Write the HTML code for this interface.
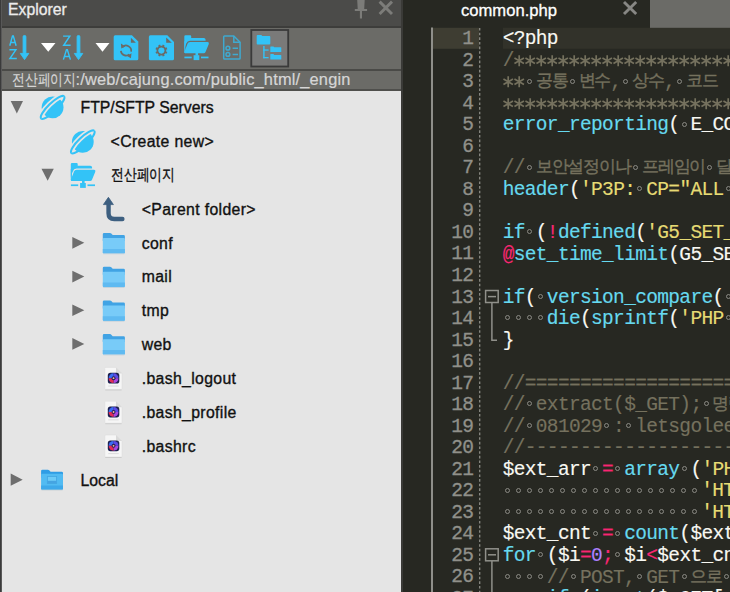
<!DOCTYPE html>
<html><head><meta charset="utf-8">
<style>
*{margin:0;padding:0;box-sizing:border-box}
html,body{width:730px;height:592px;overflow:hidden;background:#272822;font-family:"Liberation Sans",sans-serif}
.a{position:absolute}
#left{position:absolute;left:0;top:0;width:401px;height:592px;background:#e5e5e5;overflow:hidden}
#hdr{left:0;top:0;width:401px;height:25.5px;background:#4b4b49}
#hdr .t{left:8px;top:-3.7px;font-size:15.8px;line-height:27px;color:#ececec;-webkit-text-stroke:0.3px #ececec}
#sep1{left:0;top:25.5px;width:401px;height:2px;background:#3d3d3b}
#tb{left:0;top:27.5px;width:401px;height:41px;background:#6b6b67}
#sep2{left:0;top:68.5px;width:401px;height:2px;background:#4a4a47}
#path{left:0;top:70.5px;width:401px;height:18.5px;background:#6b6b67}
#path .t{left:12px;top:-1.2px;letter-spacing:0.18px;font-size:16.4px;line-height:20px;color:#d6d6d6;white-space:nowrap;-webkit-text-stroke:0.2px #d6d6d6}
#sep3{left:0;top:89px;width:401px;height:2px;background:#4f4f4c}
#lb{left:0;top:0;width:2px;height:592px;background:linear-gradient(90deg,#353535 0,#444 65%,#8a8a8a 100%);z-index:3}
#split{left:401px;top:0;width:2.2px;height:592px;background:#3a3a37;z-index:5}
.row{position:absolute;font-size:15.8px;color:#111;white-space:nowrap;line-height:20px;margin-top:0.6px;-webkit-text-stroke:0.35px #111}
#ed{position:absolute;left:403.5px;top:0;width:326.5px;height:592px;background:#272822;overflow:hidden}
.ln{position:absolute;left:0;width:473.4px;text-align:right;font-family:"Liberation Mono",monospace;font-size:19.5px;letter-spacing:-0.66px;color:#90908a;line-height:21.53px;height:21.53px;margin-top:1.2px;-webkit-text-stroke:0.3px #90908a}
.cl{position:absolute;left:502.7px;white-space:pre;font-family:"Liberation Mono",monospace;font-size:19.5px;letter-spacing:-0.66px;color:#f8f8f2;line-height:21.53px;height:21.53px;margin-top:1.3px;-webkit-text-stroke:0.15px currentColor}
.c{color:#75715e}.f{color:#66d9ef}.s{color:#e6db74}.k{color:#f92672}.n{color:#ae81ff}.w{color:#f8f8f2}
.ko{position:relative;top:-1px;font-size:17.2px;letter-spacing:-1.16px;-webkit-text-stroke:0.35px currentColor}
.d{display:inline-block;width:11.04px;height:21.53px;position:relative;vertical-align:top}
.d::after{content:"";box-sizing:border-box;position:absolute;left:2.2px;top:6.2px;width:5px;height:5px;border:1.4px solid #8a8a84;border-radius:50%}
.st{display:inline-block;width:11.04px;height:21.53px;vertical-align:top}
</style></head><body>
<div id="left">
  <div id="lb" class="a"></div>
  <div id="hdr" class="a"><div class="t a">Explorer</div>
    <svg class="a" style="left:0;top:0" width="401" height="26">
      <path d="M357.2 0 H364.7 L364.2 8.9 H367.1 V11 H362 V18.5 H359.9 V11 H354.8 V8.9 H357.7 Z" fill="#7c7c79"/>
      <path d="M379.6 1.6 L392 14 M392 1.6 L379.6 14" stroke="#7c7c79" stroke-width="2.9"/>
    </svg>
  </div>
  <div id="sep1" class="a"></div>
  <div id="tb" class="a"></div>
  <div id="sep2" class="a"></div>
  <div id="path" class="a"><div class="t a"><span style="display:inline-block;font-size:15.9px;letter-spacing:0;transform:scaleX(0.8);transform-origin:0 0;width:63.5px;position:relative;top:-0.5px;-webkit-text-stroke:0.15px #d6d6d6">전산페이지</span><span style="margin-left:0px">:/web/cajung.com/public_html/_engin</span></div></div>
  <div id="sep3" class="a"></div>
  <svg class="a" style="left:0;top:0" width="401" height="71">
    <g fill="none" stroke="#33c3f7" stroke-width="1.45" stroke-linejoin="miter">
      <path d="M9.8 45.7 L12.5 35.9 H13.3 L16.1 45.7 M10.7 42.5 H15.2"/>
      <path d="M9.4 49.8 H15.9 L9.9 58.5 H16.8"/>
      <path d="M63.1 36.1 H69.8 L63.7 45.3 H70.6"/>
      <path d="M63.4 59.6 L66.5 49.6 H67.3 L70.4 59.6 M64.4 56.5 H69.4"/>
    </g>
    <g fill="#33c3f7" stroke="#33c3f7" stroke-width="0.9" stroke-linejoin="round">
      <rect x="23.1" y="35.5" width="2.8" height="18.5" rx="1.2"/>
      <path d="M20.3 53.4 H28.8 L24.55 59.6 Z"/>
      <rect x="77.1" y="35.5" width="2.8" height="18.5" rx="1.2"/>
      <path d="M74.3 53.4 H82.8 L78.55 59.6 Z"/>
    </g>
    <path d="M41 43 H55.5 L48.25 51.7 Z M95.5 43 H109.5 L102.5 51.7 Z" fill="#fff"/>
    <!-- refresh doc -->
    <path d="M115.2 35.2 H131.9 L138.3 41.6 V58.8 Q138.3 60.3 136.8 60.3 H115.2 Q113.7 60.3 113.7 58.8 V36.7 Q113.7 35.2 115.2 35.2 Z" fill="#33c3f7"/>
    <path d="M130.9 37.8 V42.75 H135.9 Z" fill="#6b6b67"/>
    <g fill="none" stroke="#6b6b67" stroke-width="1.7">
      <path d="M122.5 46.9 A5.2 5.2 0 0 1 131.12 51.6"/>
      <path d="M120.88 50.8 A5.2 5.2 0 0 0 129.4 54.3"/>
    </g>
    <path d="M120.9 43.4 L121.3 48.6 L125.4 46.4 Z M127.1 55.9 L131.5 53.2 L130.9 58.2 Z" fill="#6b6b67"/>
    <!-- settings doc -->
    <path d="M150.4 35.2 H167.3 L174 41.9 V58.8 Q174 60.3 172.5 60.3 H150.4 Q148.9 60.3 148.9 58.8 V36.7 Q148.9 35.2 150.4 35.2 Z" fill="#33c3f7"/>
    <path d="M166.2 37.4 V42.75 H171.8 Z" fill="#6b6b67"/>
    <g transform="translate(161.4 50.55)">
      <circle r="4" fill="none" stroke="#6b6b67" stroke-width="1.7"/>
      <g fill="#6b6b67">
        <rect x="-1" y="-6" width="2" height="2.6" transform="rotate(22.5)"/>
        <rect x="-1" y="-6" width="2" height="2.6" transform="rotate(67.5)"/>
        <rect x="-1" y="-6" width="2" height="2.6" transform="rotate(112.5)"/>
        <rect x="-1" y="-6" width="2" height="2.6" transform="rotate(157.5)"/>
        <rect x="-1" y="-6" width="2" height="2.6" transform="rotate(202.5)"/>
        <rect x="-1" y="-6" width="2" height="2.6" transform="rotate(247.5)"/>
        <rect x="-1" y="-6" width="2" height="2.6" transform="rotate(292.5)"/>
        <rect x="-1" y="-6" width="2" height="2.6" transform="rotate(337.5)"/>
      </g>
    </g>
    <!-- network folder -->
    <g transform="translate(184.3 35.2)"><use href="#netf" style="--bg:#6b6b67"/></g>
    <!-- list doc -->
    <g fill="none" stroke="#3fa9cf" stroke-width="1.5">
      <path d="M224.5 36 H233.8 L240.1 42.3 V58.2 Q240.1 59 239.3 59 H224.5 Q223.7 59 223.7 58.2 V36.8 Q223.7 36 224.5 36 Z"/>
      <path d="M233.8 36 V42.3 H240.1"/>
      <circle cx="227.9" cy="48.2" r="1.9"/>
      <circle cx="227.9" cy="54.4" r="1.9"/>
      <path d="M232.6 48.2 H238 M232.6 54.4 H238"/>
    </g>
    <!-- pressed tree button -->
    <rect x="251.3" y="30" width="36.9" height="36.5" fill="#7a7a79" stroke="#3a3a3a" stroke-width="1.8"/>
    <g fill="#33c3f7">
      <path d="M256.7 36 Q256.7 35.1 257.6 35.1 H261 Q261.8 35.1 262.2 36 H269.4 Q270.3 36 270.3 36.9 V43.5 Q270.3 44.4 269.4 44.4 H257.6 Q256.7 44.4 256.7 43.5 Z"/>
      <path d="M270.3 47 Q270.3 46.5 270.8 46.5 H273.5 L274.2 47.3 H280.8 Q281.3 47.3 281.3 47.8 V51.5 Q281.3 52 280.8 52 H270.8 Q270.3 52 270.3 51.5 Z"/>
      <path d="M270.3 54.6 Q270.3 54.1 270.8 54.1 H273.5 L274.2 54.9 H280.8 Q281.3 54.9 281.3 55.4 V59.1 Q281.3 59.6 280.8 59.6 H270.8 Q270.3 59.6 270.3 59.1 Z"/>
      <rect x="263.2" y="46" width="1.4" height="12.3"/>
      <rect x="263.2" y="49.4" width="5.4" height="1.3"/>
      <rect x="263.2" y="57" width="5.4" height="1.3"/>
    </g>
  </svg>
  <!-- tree -->
  <div class="row" style="left:80.5px;top:97px">FTP/SFTP Servers</div>
  <div class="row" style="left:110.6px;top:131px;letter-spacing:0.35px">&lt;Create new&gt;</div>
  <div class="row" style="left:110.5px;top:165px"><span style="display:inline-block;font-size:15.9px;letter-spacing:0;transform:scaleX(0.8);transform-origin:0 0;position:relative;top:-1px">전산페이지</span></div>
  <div class="row" style="left:141.7px;top:199px;letter-spacing:0.35px">&lt;Parent folder&gt;</div>
  <div class="row" style="left:141.7px;top:233px;letter-spacing:0.35px">conf</div>
  <div class="row" style="left:141.7px;top:266.5px;letter-spacing:0.35px">mail</div>
  <div class="row" style="left:141.7px;top:300px;letter-spacing:0.35px">tmp</div>
  <div class="row" style="left:141.7px;top:334px;letter-spacing:0.35px">web</div>
  <div class="row" style="left:141.7px;top:368px;letter-spacing:0.35px">.bash_logout</div>
  <div class="row" style="left:141.7px;top:402px;letter-spacing:0.35px">.bash_profile</div>
  <div class="row" style="left:141.7px;top:436px;letter-spacing:0.35px">.bashrc</div>
  <div class="row" style="left:80.5px;top:470.2px">Local</div>
  <svg class="a" style="left:0;top:0" width="401" height="592">
    <defs>
      <linearGradient id="fg" x1="0" y1="0" x2="0" y2="1"><stop offset="0" stop-color="#7fd3f7"/><stop offset="1" stop-color="#4fb4ec"/></linearGradient>
      <linearGradient id="lg" x1="0" y1="0" x2="0" y2="1"><stop offset="0" stop-color="#4cb6ee"/><stop offset="1" stop-color="#2a93dc"/></linearGradient>
      <g id="glob">
        <g transform="translate(12.3 12.9) rotate(-44)">
          <ellipse rx="15.9" ry="4.3" fill="none" stroke="#33c3f7" stroke-width="2.1"/>
          <circle r="10.9" fill="#33c3f7"/>
          <path d="M-15.9 0 A15.9 4.3 0 0 1 15.9 0" fill="none" stroke="#e5e5e5" stroke-width="5.4"/>
          <path d="M-15.9 0 A15.9 4.3 0 0 1 15.9 0" fill="none" stroke="#33c3f7" stroke-width="2.1"/>
        </g>
      </g>
      <g id="fold">
        <path d="M0 1.3 Q0 0 1.3 0 H7.2 Q8 0 8.5 0.6 L9.9 2.1 H20.8 Q22.1 2.1 22.1 3.4 V8 H0 Z" fill="#41a3e4"/>
        <path d="M0 6.2 Q0 5.1 1.1 5.1 H21 Q22.1 5.1 22.1 6.2 V19.3 Q22.1 20.5 20.9 20.5 H1.2 Q0 20.5 0 19.3 Z" fill="#78cbf8"/>
        <path d="M0 15.9 H22.1 V19.3 Q22.1 20.5 20.9 20.5 H1.2 Q0 20.5 0 19.3 Z" fill="#5fbaf1"/>
        <rect x="0.5" y="20.5" width="21.1" height="0.8" fill="#c9d3da"/>
      </g>
      <g id="netf" fill="#33c3f7">
        <path d="M0 1.2 Q0 0 1.2 0 H5.9 Q6.9 0 6.9 1 V2.8 H19.5 Q21.3 2.8 21.3 4.6 V12 H4 V18 H1.2 Q0 18 0 16.8 Z"/>
        <path d="M0.6 15.2 L3.2 8.6 Q3.8 6.8 5.8 6.8 H23.2 Q25.1 6.8 24.5 8.8 L21.2 16.8 Q20.7 18 19.4 18 H1.2 Q0 18 0 16.8 Z" stroke="var(--bg)" stroke-width="2.4"/>
        <path d="M0.6 15.2 L3.2 8.6 Q3.8 6.8 5.8 6.8 H23.2 Q25.1 6.8 24.5 8.8 L21.2 16.8 Q20.7 18 19.4 18 H1.2 Q0 18 0 16.8 Z"/>
        <path d="M0 6 H1.1 V18 H1.2 Q0 18 0 16.8 Z"/>
        <rect x="11.2" y="17.5" width="2.6" height="3"/>
        <rect x="9.3" y="20" width="5.7" height="4.9"/>
        <rect x="0.1" y="21.4" width="7.3" height="1.7"/>
        <rect x="16.7" y="21.4" width="7.5" height="1.7"/>
      </g>
      <g id="file">
        <path d="M0 0.8 Q0 0 0.8 0 H11.2 L17.2 6 V21.2 Q17.2 22 16.4 22 H0.8 Q0 22 0 21.2 Z" fill="#f6f6f6" stroke="#dadada" stroke-width="0.5"/>
        <path d="M0.4 22.2 H16.8 V23 H0.4 Z" fill="#c8c8c8"/>
        <path d="M11.2 0 V5 Q11.2 6 12.2 6 H17.2 Z" fill="#d9d9d9"/>
        <rect x="3" y="5.4" width="11.5" height="10.8" rx="2.6" fill="#1e2150"/>
        <path d="M8.75 10.8 L8.75 5.9 A4.9 4.9 0 0 0 3.85 10.8 Z" fill="#3a6cf4"/>
        <path d="M8.75 10.8 L13.65 10.8 A4.9 4.9 0 0 0 8.75 5.9 Z" fill="#5b4ae6"/>
        <path d="M8.75 10.8 L8.75 15.7 A4.9 4.9 0 0 0 13.65 10.8 Z" fill="#a846de"/>
        <path d="M8.75 10.8 L3.85 10.8 A4.9 4.9 0 0 0 8.75 15.7 Z" fill="#e02c58"/>
        <circle cx="8.75" cy="10.8" r="2" fill="#2a1f5a"/>
        <circle cx="8.75" cy="10.8" r="0.9" fill="#f4c090"/>
        <rect x="3.4" y="18.2" width="10.5" height="0.9" fill="#d8d8d8"/>
      </g>
    </defs>
    <g fill="#6e6e6e">
      <path d="M10.7 101 H23 L16.85 113.4 Z"/>
      <path d="M41.5 168.8 H53.8 L47.65 180.8 Z"/>
      <path d="M72.3 237 L84.3 242.85 L72.3 248.7 Z"/>
      <path d="M72.3 270.7 L84.3 276.55 L72.3 282.4 Z"/>
      <path d="M72.3 304.4 L84.3 310.25 L72.3 316.1 Z"/>
      <path d="M72.3 338.1 L84.3 343.95 L72.3 349.8 Z"/>
      <path d="M10.7 473.6 L22.7 479.65 L10.7 485.7 Z"/>
    </g>
    <use href="#glob" x="40.3" y="94.5"/>
    <use href="#glob" x="70.5" y="129"/>
    <!-- network folder tree -->
    <g transform="translate(70.8 163)"><use href="#netf" style="--bg:#e5e5e5"/></g>
    <!-- parent arrow -->
    <path d="M108.55 203 V213.2 Q108.55 219 114.3 219 H122.4" fill="none" stroke="#3d5f80" stroke-width="4.4" stroke-linecap="round"/>
    <path d="M103.4 204.6 L108.4 197.3 L113.4 204.6 Z" fill="#3d5f80" stroke="#3d5f80" stroke-width="0.8" stroke-linejoin="round"/>
    <use href="#fold" x="102.8" y="233"/>
    <use href="#fold" x="102.8" y="266.7"/>
    <use href="#fold" x="102.8" y="300.4"/>
    <use href="#fold" x="102.8" y="334.1"/>
    <use href="#file" x="104.8" y="367.4"/>
    <use href="#file" x="104.8" y="401.2"/>
    <use href="#file" x="104.8" y="435"/>
    <g transform="translate(41.1 469.7)">
      <path d="M0 1.3 Q0 0 1.3 0 H6.8 Q7.6 0 8.1 0.6 L9.5 2.1 H20.6 Q21.9 2.1 21.9 3.4 V8 H0 Z" fill="#2f9de5"/>
      <path d="M0 5.2 Q0 4 1.2 4 H20.7 Q21.9 4 21.9 5.2 V18.8 Q21.9 20 20.7 20 H1.2 Q0 20 0 18.8 Z" fill="#52bbf2"/>
      <path d="M0 15.9 H21.9 V18.8 Q21.9 20 20.7 20 H1.2 Q0 20 0 18.8 Z" fill="#3ea9ea"/>
      <rect x="6.3" y="6.8" width="9.2" height="7" fill="#6dcbf7" stroke="#45a9e4" stroke-width="0.9"/>
      <rect x="6.3" y="11.1" width="9.2" height="2.7" fill="#45a4e2"/>
      <rect x="0.4" y="20" width="21.1" height="0.7" fill="#c4ccd2"/>
    </g>
  </svg>
</div>
<div id="split" class="a"></div>
<div id="edw" class="a" style="left:403.5px;top:0;width:326.5px;height:592px;background:#272822"></div>
<div class="a" style="left:650px;top:0;width:80px;height:27.5px;background:#6b6b67"></div>
<div class="a" style="left:461px;top:0;font-size:16.6px;line-height:21px;color:#fff;-webkit-text-stroke:0.3px #fff">common.php</div>
<svg class="a" style="left:0;top:0" width="730" height="592">
  <path d="M624 2 L636.2 14 M636.2 2 L624 14" stroke="#878784" stroke-width="2.9"/>
  <rect x="431" y="27.5" width="2" height="565" fill="#8f8f8a"/>
  <rect x="433" y="27.8" width="46" height="21" fill="#3e3d32"/>
  <rect x="503" y="27.8" width="227" height="21" fill="#32322a"/>
  <line x1="479.7" y1="28" x2="479.7" y2="592" stroke="#8a8a84" stroke-width="1.3" stroke-dasharray="2.6 2.05"/>
  <g fill="none" stroke="#90908a" stroke-width="1.5">
    <rect x="485.6" y="290.5" width="12.6" height="12"/>
    <path d="M488 296.6 H496"/>
    <path d="M491.9 302.5 V340.3 H497"/>
    <rect x="485.6" y="548.8" width="12.6" height="12"/>
    <path d="M488 554.8 H496"/>
    <path d="M491.9 560.8 V592"/>
  </g>
</svg>
<svg width="0" height="0" style="position:absolute"><defs><g id="star" stroke="#75715e" stroke-width="1.7" fill="none"><path d="M5.2 4.3 V15.3 M0.45 7.05 L9.95 12.55 M0.45 12.55 L9.95 7.05"/></g></defs></svg>
<div id="code">
<div class="ln" style="top:28.00px">1</div>
<div class="cl" style="top:28.00px"><span class="w">&lt;?php</span></div>
<div class="ln" style="top:49.53px">2</div>
<div class="cl" style="top:49.53px"><span class="c">/<svg class="st"><use href="#star"/></svg><svg class="st"><use href="#star"/></svg><svg class="st"><use href="#star"/></svg><svg class="st"><use href="#star"/></svg><svg class="st"><use href="#star"/></svg><svg class="st"><use href="#star"/></svg><svg class="st"><use href="#star"/></svg><svg class="st"><use href="#star"/></svg><svg class="st"><use href="#star"/></svg><svg class="st"><use href="#star"/></svg><svg class="st"><use href="#star"/></svg><svg class="st"><use href="#star"/></svg><svg class="st"><use href="#star"/></svg><svg class="st"><use href="#star"/></svg><svg class="st"><use href="#star"/></svg><svg class="st"><use href="#star"/></svg><svg class="st"><use href="#star"/></svg><svg class="st"><use href="#star"/></svg><svg class="st"><use href="#star"/></svg><svg class="st"><use href="#star"/></svg><svg class="st"><use href="#star"/></svg><svg class="st"><use href="#star"/></svg><svg class="st"><use href="#star"/></svg><svg class="st"><use href="#star"/></svg><svg class="st"><use href="#star"/></svg><svg class="st"><use href="#star"/></svg><svg class="st"><use href="#star"/></svg><svg class="st"><use href="#star"/></svg><svg class="st"><use href="#star"/></svg><svg class="st"><use href="#star"/></svg><svg class="st"><use href="#star"/></svg><svg class="st"><use href="#star"/></svg><svg class="st"><use href="#star"/></svg><svg class="st"><use href="#star"/></svg><svg class="st"><use href="#star"/></svg><svg class="st"><use href="#star"/></svg><svg class="st"><use href="#star"/></svg><svg class="st"><use href="#star"/></svg><svg class="st"><use href="#star"/></svg><svg class="st"><use href="#star"/></svg></span></div>
<div class="ln" style="top:71.06px">3</div>
<div class="cl" style="top:71.06px"><span class="c"><svg class="st"><use href="#star"/></svg><svg class="st"><use href="#star"/></svg><i class="d"></i><span class="ko">공통</span><i class="d"></i><span class="ko">변수</span>,<i class="d"></i><span class="ko">상수</span>,<i class="d"></i><span class="ko">코드</span></span></div>
<div class="ln" style="top:92.59px">4</div>
<div class="cl" style="top:92.59px"><span class="c"><svg class="st"><use href="#star"/></svg><svg class="st"><use href="#star"/></svg><svg class="st"><use href="#star"/></svg><svg class="st"><use href="#star"/></svg><svg class="st"><use href="#star"/></svg><svg class="st"><use href="#star"/></svg><svg class="st"><use href="#star"/></svg><svg class="st"><use href="#star"/></svg><svg class="st"><use href="#star"/></svg><svg class="st"><use href="#star"/></svg><svg class="st"><use href="#star"/></svg><svg class="st"><use href="#star"/></svg><svg class="st"><use href="#star"/></svg><svg class="st"><use href="#star"/></svg><svg class="st"><use href="#star"/></svg><svg class="st"><use href="#star"/></svg><svg class="st"><use href="#star"/></svg><svg class="st"><use href="#star"/></svg><svg class="st"><use href="#star"/></svg><svg class="st"><use href="#star"/></svg><svg class="st"><use href="#star"/></svg><svg class="st"><use href="#star"/></svg><svg class="st"><use href="#star"/></svg><svg class="st"><use href="#star"/></svg><svg class="st"><use href="#star"/></svg><svg class="st"><use href="#star"/></svg><svg class="st"><use href="#star"/></svg><svg class="st"><use href="#star"/></svg><svg class="st"><use href="#star"/></svg><svg class="st"><use href="#star"/></svg><svg class="st"><use href="#star"/></svg><svg class="st"><use href="#star"/></svg><svg class="st"><use href="#star"/></svg><svg class="st"><use href="#star"/></svg><svg class="st"><use href="#star"/></svg><svg class="st"><use href="#star"/></svg><svg class="st"><use href="#star"/></svg><svg class="st"><use href="#star"/></svg><svg class="st"><use href="#star"/></svg><svg class="st"><use href="#star"/></svg></span></div>
<div class="ln" style="top:114.12px">5</div>
<div class="cl" style="top:114.12px"><span class="f">error_reporting</span><span class="w">(</span><span class="w"><i class="d"></i>E_CORE_ERROR</span></div>
<div class="ln" style="top:135.65px">6</div>
<div class="cl" style="top:135.65px"></div>
<div class="ln" style="top:157.18px">7</div>
<div class="cl" style="top:157.18px"><span class="c">//<i class="d"></i><span class="ko">보안설정이나</span><i class="d"></i><span class="ko">프레임이</span><i class="d"></i><span class="ko">달라도</span></span></div>
<div class="ln" style="top:178.71px">8</div>
<div class="cl" style="top:178.71px"><span class="f">header</span><span class="w">(</span><span class="s">&#x27;P3P:<i class="d"></i>CP=&quot;ALL<i class="d"></i>CURa</span></div>
<div class="ln" style="top:200.24px">9</div>
<div class="cl" style="top:200.24px"></div>
<div class="ln" style="top:221.77px">10</div>
<div class="cl" style="top:221.77px"><span class="f">if</span><span class="w"><i class="d"></i>(</span><span class="k">!</span><span class="f">defined</span><span class="w">(</span><span class="s">&#x27;G5_SET_TIME</span></div>
<div class="ln" style="top:243.30px">11</div>
<div class="cl" style="top:243.30px"><span class="k">@</span><span class="f">set_time_limit</span><span class="w">(G5_SET_TIME</span></div>
<div class="ln" style="top:264.83px">12</div>
<div class="cl" style="top:264.83px"></div>
<div class="ln" style="top:286.36px">13</div>
<div class="cl" style="top:286.36px"><span class="f">if</span><span class="w">(<i class="d"></i></span><span class="f">version_compare</span><span class="w">(<i class="d"></i>PHP</span></div>
<div class="ln" style="top:307.89px">14</div>
<div class="cl" style="top:307.89px"><span class="w"><i class="d"></i><i class="d"></i><i class="d"></i><i class="d"></i></span><span class="f">die</span><span class="w">(</span><span class="f">sprintf</span><span class="w">(</span><span class="s">&#x27;PHP<i class="d"></i>5.2</span></div>
<div class="ln" style="top:329.42px">15</div>
<div class="cl" style="top:329.42px"><span class="w">}</span></div>
<div class="ln" style="top:350.95px">16</div>
<div class="cl" style="top:350.95px"></div>
<div class="ln" style="top:372.48px">17</div>
<div class="cl" style="top:372.48px"><span class="c">//========================================</span></div>
<div class="ln" style="top:394.01px">18</div>
<div class="cl" style="top:394.01px"><span class="c">//<i class="d"></i>extract($_GET);<i class="d"></i><span class="ko">명령으로</span></span></div>
<div class="ln" style="top:415.54px">19</div>
<div class="cl" style="top:415.54px"><span class="c">//<i class="d"></i>081029<i class="d"></i>:<i class="d"></i>letsgolee<i class="d"></i><span class="ko">님께서</span></span></div>
<div class="ln" style="top:437.07px">20</div>
<div class="cl" style="top:437.07px"><span class="c">//----------------------------------------</span></div>
<div class="ln" style="top:458.60px">21</div>
<div class="cl" style="top:458.60px"><span class="w">$ext_arr<i class="d"></i></span><span class="k">=</span><span class="w"><i class="d"></i></span><span class="f">array</span><span class="w"><i class="d"></i>(</span><span class="s">&#x27;PHP_SELF&#x27;</span></div>
<div class="ln" style="top:480.13px">22</div>
<div class="cl" style="top:480.13px"><span class="w"><i class="d"></i><i class="d"></i><i class="d"></i><i class="d"></i><i class="d"></i><i class="d"></i><i class="d"></i><i class="d"></i><i class="d"></i><i class="d"></i><i class="d"></i><i class="d"></i><i class="d"></i><i class="d"></i><i class="d"></i><i class="d"></i><i class="d"></i><i class="d"></i></span><span class="s">&#x27;HTTP_ENV</span></div>
<div class="ln" style="top:501.66px">23</div>
<div class="cl" style="top:501.66px"><span class="w"><i class="d"></i><i class="d"></i><i class="d"></i><i class="d"></i><i class="d"></i><i class="d"></i><i class="d"></i><i class="d"></i><i class="d"></i><i class="d"></i><i class="d"></i><i class="d"></i><i class="d"></i><i class="d"></i><i class="d"></i><i class="d"></i><i class="d"></i><i class="d"></i></span><span class="s">&#x27;HTTP_GET</span></div>
<div class="ln" style="top:523.19px">24</div>
<div class="cl" style="top:523.19px"><span class="w">$ext_cnt<i class="d"></i></span><span class="k">=</span><span class="w"><i class="d"></i></span><span class="f">count</span><span class="w">($ext_arr);</span></div>
<div class="ln" style="top:544.72px">25</div>
<div class="cl" style="top:544.72px"><span class="f">for</span><span class="w"><i class="d"></i>($i</span><span class="k">=</span><span class="n">0</span><span class="k">;</span><span class="w"><i class="d"></i>$i</span><span class="k">&lt;</span><span class="w">$ext_cnt;</span></div>
<div class="ln" style="top:566.25px">26</div>
<div class="cl" style="top:566.25px"><span class="w"><i class="d"></i><i class="d"></i><i class="d"></i><i class="d"></i></span><span class="c">//<i class="d"></i>POST,<i class="d"></i>GET<i class="d"></i><span class="ko">으로</span><i class="d"></i><span class="ko">선언된</span></span></div>
<div class="ln" style="top:587.78px">27</div>
<div class="cl" style="top:587.78px"><span class="w"><i class="d"></i><i class="d"></i><i class="d"></i><i class="d"></i></span><span class="f">if</span><span class="w"><i class="d"></i>(</span><span class="f">isset</span><span class="w">($_GET[</span></div>
</div>
</body></html>
